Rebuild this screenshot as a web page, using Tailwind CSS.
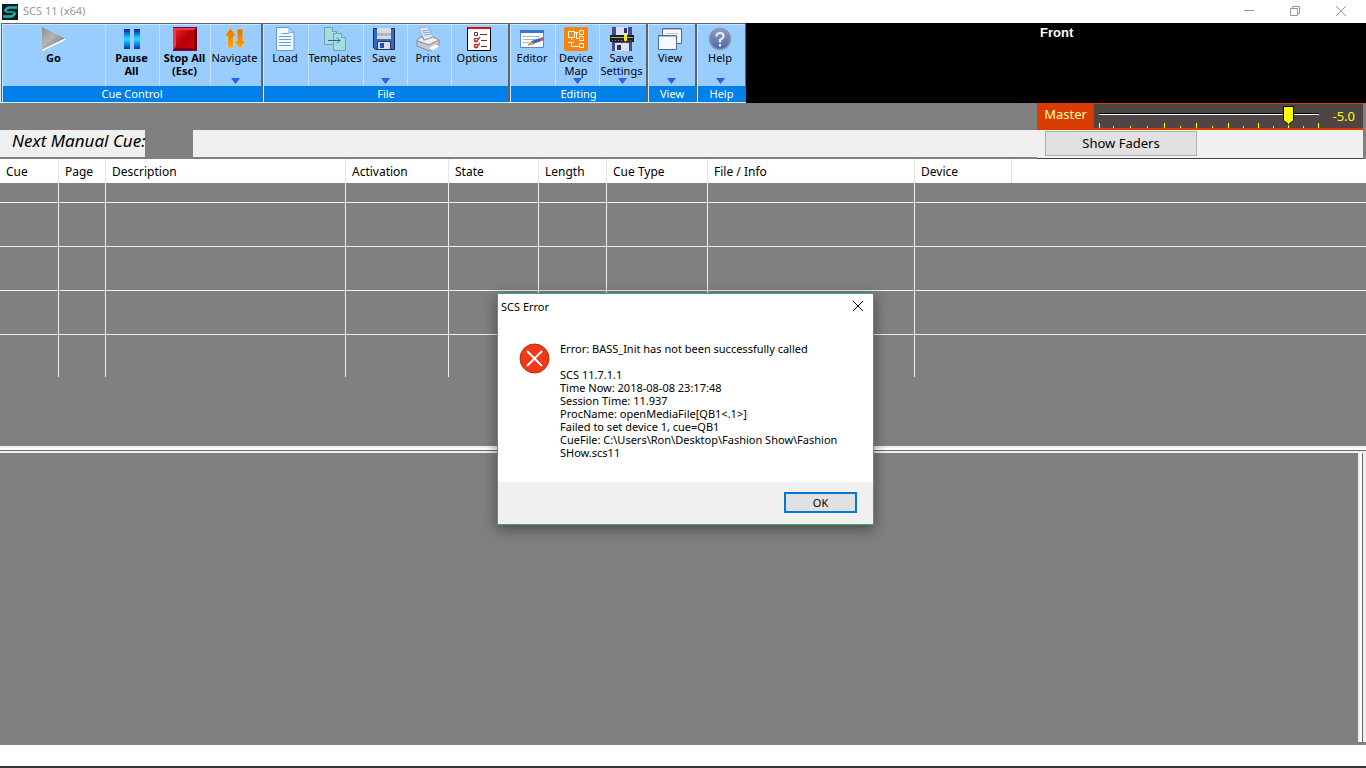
<!DOCTYPE html>
<html lang="en">
<head>
<meta charset="utf-8">
<title>SCS 11 (x64)</title>
<script src="https://cdn.jsdelivr.net/npm/@tailwindcss/browser@4"></script>
</head>
<body class="flex h-screen flex-col overflow-hidden bg-[#808080] font-['Noto_Sans',sans-serif] text-xs text-black">

<svg class="absolute h-0 w-0" aria-hidden="true">
  <defs>
    <linearGradient id="gGo" x1="0" y1="0" x2="1" y2="1"><stop offset="0" stop-color="#8c8c8c"/><stop offset=".4" stop-color="#b4b4b4"/><stop offset=".7" stop-color="#909090"/><stop offset="1" stop-color="#aaa"/></linearGradient>
    <linearGradient id="gPause" x1="0" y1="0" x2="0" y2="1"><stop offset="0" stop-color="#0a16a0"/><stop offset=".5" stop-color="#22e4ff"/><stop offset="1" stop-color="#0a30b8"/></linearGradient>
    <linearGradient id="gStop" x1="0" y1="0" x2="1" y2="1"><stop offset="0" stop-color="#e0202a"/><stop offset=".5" stop-color="#b80008"/><stop offset="1" stop-color="#d00010"/></linearGradient>
    <linearGradient id="gNav" x1="0" y1="0" x2="0" y2="1"><stop offset="0" stop-color="#d87800"/><stop offset="1" stop-color="#ffa210"/></linearGradient>
    <linearGradient id="gHelp" x1="0" y1="0" x2="0" y2="1"><stop offset="0" stop-color="#8c9ccc"/><stop offset="1" stop-color="#4c66a4"/></linearGradient>
  </defs>
</svg>

<header class="flex h-[23px] shrink-0 items-center bg-white">
  <svg class="ml-[2px] h-4 w-4" viewBox="0 0 16 16"><path fill="#101c20" d="M0 0h16v16H0z"/><path fill="none" stroke="#18b4b0" stroke-width="2.600" d="M15 3.500H8Q4 3.500 3 7.500M1 12.500h7q4 0 5-4"/><path fill="none" stroke="#18b4b0" stroke-width="1.600" d="M3 6.500q1 2 4 1.500h3q2.500 0 3 1.500"/></svg>
  <h1 class="ml-[5px] text-[11px] text-[#999]">SCS 11 (x64)</h1>
  <div class="ml-auto flex">
    <button aria-label="Minimize" class="flex h-5 w-[46px] items-center justify-center"><svg class="h-3 w-3" viewBox="0 0 12 12" stroke="#999"><path d="M1 4.500h10"/></svg></button>
    <button aria-label="Restore" class="flex h-5 w-[46px] items-center justify-center"><svg class="h-3 w-3" viewBox="0 0 12 12" fill="none" stroke="#999"><path d="M1.500 2.500h7v7h-7zM3.500 2.500v-2h7v7h-2"/></svg></button>
    <button aria-label="Close" class="mr-[2px] flex h-5 w-[46px] items-center justify-center"><svg class="h-3 w-3" viewBox="0 0 12 12" stroke="#999"><path d="M1 0l10 10M11 0L1 10"/></svg></button>
  </div>
</header>

<div class="flex h-20 shrink-0 bg-black">
  <nav class="flex w-[746px] shrink-0 border-b border-l border-[#d8ecfa] bg-[#606468] px-px pt-px text-[11px] leading-[13px] whitespace-nowrap">
    <section class="mr-[2px] flex w-[259px] flex-col border-t border-l border-[#c8e6ff]">
      <div class="flex flex-1 bg-[#99ccff]">
        <button class="flex w-[103px] flex-col items-center border-r border-[#c4e2ff] pt-[2px] pr-px font-bold"><svg class="h-6 w-6" viewBox="0 0 24 24"><path fill="url(#gGo)" d="M0 0l24 12L0 24z"/><path fill="none" stroke="#fff" stroke-width="1.500" d="M0 23.500L23.500 12"/></svg><span>Go</span></button>
        <button class="flex w-[54px] flex-col items-center border-r border-[#c4e2ff] pt-[2px] pr-[2px] font-bold"><svg class="h-6 w-6" viewBox="0 0 24 24"><path fill="url(#gPause)" d="M4 2h6v20H4zM14 2h6v20h-6z"/></svg><span>Pause<br>All</span></button>
        <button class="flex w-[51px] flex-col items-center border-r border-[#c4e2ff] pt-[2px] pr-px font-bold"><svg class="h-6 w-6" viewBox="0 0 24 24"><path fill="#780068" d="M0 0h24v24H0z"/><path fill="#f03848" d="M0 1h23l-2 2H3v17l-3 3z"/><path fill="#800008" d="M24 1v22H0l3-3h17V4z"/><path fill="url(#gStop)" d="M3 3h18v18H3z"/></svg><span>Stop All<br>(Esc)</span></button>
        <button class="relative flex flex-1 flex-col items-center pt-[2px] pr-[3px]"><svg class="h-6 w-6" viewBox="0 0 24 24"><path fill="url(#gNav)" stroke="#d4d0b0" stroke-width=".8" d="M7.500 1l6 8h-3v12h-6V9h-3z"/><path fill="url(#gNav)" stroke="#d4d0b0" stroke-width=".8" d="M14 2h6v12h3l-6 8-6-8h3z"/></svg><span>Navigate</span><svg class="absolute top-[53px] left-[20px] h-[6px] w-[9px]" viewBox="0 0 9 6"><path fill="#2860f8" d="M0 0h9L4.500 6z"/></svg></button>
      </div>
      <h2 class="h-4 bg-[#0080e8] pt-px text-center text-white">Cue Control</h2>
    </section>
    <section class="mr-[2px] flex w-[245px] flex-col border-t border-l border-[#c8e6ff]">
      <div class="flex flex-1 bg-[#99ccff]">
        <button class="flex w-[45px] flex-col items-center border-r border-[#c4e2ff] pt-[2px] pr-[2px]"><svg class="h-6 w-6" viewBox="0 0 24 24"><path fill="#f4faff" stroke="#6498d8" d="M3.500.500H16l5 5v18H3.500z"/><path fill="#b0d8f8" stroke="#78b0e8" d="M16 .500v5h5z"/><path stroke="#5aa4e8" d="M9 6.500h7M6 9.500h12M6 12.500h12M6 15.500h12M6 18.500h12"/></svg><span>Load</span></button>
        <button class="flex w-[55px] flex-col items-center border-r border-[#c4e2ff] pt-[2px] pr-[2px]"><svg class="h-6 w-6" viewBox="0 0 24 24" fill="#a6dce0" stroke="#68a4b4"><path d="M1.500.500h8l4 4v13h-12z"/><path d="M9.500.500v4h4"/><path d="M10.500 6.500h8l4 4v13h-12z"/><path d="M18.500 6.500v4h4"/><path stroke="#2868a0" fill="none" d="M5 13.500h12M14 10.500l3 3-3 3"/></svg><span>Templates</span></button>
        <button class="relative flex w-[44px] flex-col items-center border-r border-[#c4e2ff] pt-[2px] pr-[3px]"><svg class="h-6 w-6" viewBox="0 0 24 24"><path fill="#3268c8" stroke="#142850" d="M1.500 1.500h21v21h-19l-2-2z"/><path fill="#d8dce0" d="M5 1h14v11H5z"/><path fill="#b4b8c0" d="M5 6h14v3H5z"/><path fill="#d8dce0" stroke="#203870" d="M5.500 14.500h13v8h-13z"/><path fill="#2050a8" d="M8 16h4v5H8z"/></svg><span>Save</span><svg class="absolute top-[53px] left-[17px] h-[6px] w-[9px]" viewBox="0 0 9 6"><path fill="#2860f8" d="M0 0h9L4.500 6z"/></svg></button>
        <button class="flex w-[44px] flex-col items-center border-r border-[#c4e2ff] pt-[2px] pr-[3px]"><svg class="h-6 w-6" viewBox="0 0 24 24"><path fill="#dce8f8" stroke="#88a0bc" stroke-width=".7" d="M3 1l9-1 7 12-10 3z"/><path stroke="#88a8c8" d="M6 4l7-1M7 6l8-1M8 8l8-1"/><path fill="#c4c8d0" stroke="#777" stroke-width=".7" d="M1 13l5-4 2 4 9-3 6 3v6l-10 5-12-5z"/><path fill="#f0f0f0" d="M2 13l4-2 2 3 9-3 5 2-9 4z"/><path fill="none" stroke="#888" stroke-width=".8" d="M1 14l12 4 10-5"/><path fill="#fff" stroke="#aaa" stroke-width=".6" d="M12 21l7-4 5 2-7 5z"/></svg><span>Print</span></button>
        <button class="flex flex-1 flex-col items-center pt-[2px] pr-[6px]"><svg class="ml-1 h-6 w-6" viewBox="0 0 24 24"><path fill="#fff" stroke="#000" d="M.500.500h23v23H.500z"/><path fill="#e80810" d="M1 0h22v2H1z"/><path fill="none" stroke="#444" d="M7.500 5.500h3v3h-3zM7.500 11.500h3v3h-3zM7.500 17.500h3v3h-3zM13 7.500h7M14 13.500h6M14 19.500h6"/><path fill="none" stroke="#f02020" stroke-width="1.300" d="M7 12l2 3 4-5M7 18l2 3 4-5"/></svg><span>Options</span></button>
      </div>
      <h2 class="h-4 bg-[#0080e8] pt-px text-center text-white">File</h2>
    </section>
    <section class="mr-[2px] flex w-[136px] flex-col border-t border-l border-[#c8e6ff]">
      <div class="flex flex-1 bg-[#99ccff]">
        <button class="flex w-[45px] flex-col items-center border-r border-[#c4e2ff] pt-[2px] pr-[2px]"><svg class="h-6 w-6" viewBox="0 0 24 24"><path fill="#f8fbff" stroke="#6888b0" d="M.500 3.500h23v17H.500z"/><path fill="#3478cc" d="M0 3h24v3H0z"/><path stroke="#a8b4c0" d="M3 9.500h17M3 12.500h14M3 15.500h6"/><path stroke="#2f68b4" stroke-width="3" d="M12 15.500l9-3"/><path fill="#e8a060" stroke="#705040" stroke-width=".5" d="M8 18l4-4 2 3z"/><path fill="#e84838" d="M20 11l3-1 1 3-2 1z"/></svg><span>Editor</span></button>
        <button class="relative flex w-[44px] flex-col items-center border-r border-[#c4e2ff] pt-[2px] pr-[3px]"><svg class="h-6 w-6" viewBox="0 0 24 24"><rect width="24" height="24" rx="2" fill="#f58410"/><path fill="none" stroke="#fff" d="M4.500 4.500h6v6h-6zM15.500 3.500h4v4h-4zM15.500 9.500h4v4h-4zM15.500 16.500h4v4h-4zM11 5.500h3M12.500 5.500v6h2M7.500 11v2M4 15.500h6M7.500 16v3.500h7"/></svg><span>Device<br>Map</span><svg class="absolute top-[53px] left-[17px] h-[6px] w-[9px]" viewBox="0 0 9 6"><path fill="#2860f8" d="M0 0h9L4.500 6z"/></svg></button>
        <button class="relative flex flex-1 flex-col items-center pt-[2px] pr-[3px]"><svg class="h-6 w-6" viewBox="0 0 24 24"><path fill="#484890" d="M2 0h20v24H2z"/><path fill="#dce0e8" d="M6 0h12v8H6zM5 16h14v8H5z"/><path fill="#303060" d="M14 1h3v5h-3zM7 18h4v5H7z"/><path fill="#202020" d="M0 8h24v7H0z"/><path stroke="#a8a8a8" d="M1 10.500h22"/><path stroke="#909040" stroke-dasharray="1 2" d="M2 13.500h20"/><path fill="#ffee00" d="M14 8h3v5l-1.500 2-1.500-2z"/></svg><span>Save<br>Settings</span><svg class="absolute top-[53px] left-[18px] h-[6px] w-[9px]" viewBox="0 0 9 6"><path fill="#2860f8" d="M0 0h9L4.500 6z"/></svg></button>
      </div>
      <h2 class="h-4 bg-[#0080e8] pt-px text-center text-white">Editing</h2>
    </section>
    <section class="mr-[2px] flex w-[47px] flex-col border-t border-l border-[#c8e6ff]">
      <button class="relative flex flex-1 flex-col items-center bg-[#99ccff] pt-[2px] pr-1"><svg class="h-6 w-6" viewBox="0 0 24 24"><path fill="#f6faff" stroke="#506c90" d="M4.500 1.500h19v15h-19z"/><path stroke="#a8bcd4" d="M5 2.500h18"/><path stroke="#c0c8d0" d="M8 6.500h12M8 10.500h12"/><path fill="#f6faff" stroke="#506c90" d="M.500 8.500h18v14H.500z"/><path stroke="#a8bcd4" d="M1 9.500h17"/></svg><span>View</span><svg class="absolute top-[53px] left-[18px] h-[6px] w-[9px]" viewBox="0 0 9 6"><path fill="#2860f8" d="M0 0h9L4.500 6z"/></svg></button>
      <h2 class="h-4 bg-[#0080e8] pt-px text-center text-white">View</h2>
    </section>
    <section class="flex flex-1 flex-col border-t border-l border-[#c8e6ff]">
      <button class="relative flex flex-1 flex-col items-center bg-[#99ccff] pt-[2px] pr-[3px]"><svg class="h-6 w-6" viewBox="0 0 24 24"><circle cx="12" cy="12" r="10.500" fill="url(#gHelp)" stroke="#9098a8" stroke-width="1.500"/><path fill="none" stroke="#e8ecf4" stroke-width="2.200" d="M8.500 9.500Q8.500 6 12 6t3.500 3Q15.500 11 12 13v2.500M12 17v2.500"/></svg><span>Help</span><svg class="absolute top-[53px] left-[18px] h-[6px] w-[9px]" viewBox="0 0 9 6"><path fill="#2860f8" d="M0 0h9L4.500 6z"/></svg></button>
      <h2 class="h-4 bg-[#0080e8] pt-px text-center text-white">Help</h2>
    </section>
  </nav>
  <p class="flex-1 pt-[2px] pl-[294px] font-['Liberation_Sans',sans-serif] text-[13px] leading-4 font-bold text-white">Front</p>
</div>

<div class="flex h-14 shrink-0 pr-[3px]">
  <div class="flex flex-1 items-end pb-[2px]">
    <label for="next" class="h-[27px] w-[145px] bg-[#f0f0f0] pl-3 text-[17px] leading-[22px] whitespace-nowrap italic">Next Manual Cue:</label>
    <input id="next" readonly class="ml-12 h-[27px] min-w-0 flex-1 bg-[#f0f0f0] outline-none">
  </div>
  <div class="flex w-[326px] flex-col border-b border-[#404040] bg-[#f0f0f0]">
    <div class="flex h-[27px] border-t border-b-2 border-[#d83c00] bg-[#504444] text-[13px]">
      <label for="master" class="w-[57px] bg-[#d83c00] text-center leading-5 text-[#ffffa8]">Master</label>
      <div class="relative w-[232px]">
        <svg class="h-6 w-[232px]" viewBox="0 0 232 24"><path fill="#000" d="M5 9h220v1H5z"/><path fill="#fff" d="M5 10h220v1H5z"/><path stroke="#ff0" d="M5.500 19v5M70.500 19v5M102.500 19v5M134.500 19v5M164.500 19v5M194.500 19v5M224.500 19v5M19.500 22v2M36.500 22v2M53.500 22v2M86.500 22v2M118.500 22v2M149.500 22v2M179.500 22v2M209.500 22v2"/><path fill="#ff0" stroke="#000" d="M189.500 2.500h10v14l-5 4-5-4z"/></svg>
        <input id="master" type="range" min="-75" max="10" step="1" value="-5" class="absolute inset-0 h-full w-full opacity-0">
      </div>
      <output for="master" class="flex-1 pr-2 text-right leading-6 text-[#ff0]">-5.0</output>
    </div>
    <button class="mt-px ml-2 h-[25px] w-[152px] border border-[#adadad] bg-[#e1e1e1] pb-[2px] text-[13px] leading-5">Show Faders</button>
  </div>
</div>

<main class="flex min-h-0 flex-1 flex-col">
  <div class="h-[287px] shrink-0">
    <table class="w-full table-fixed border-separate border-spacing-0 text-xs">
      <colgroup><col class="w-[59px]"><col class="w-[47px]"><col class="w-[240px]"><col class="w-[103px]"><col class="w-[90px]"><col class="w-[68px]"><col class="w-[101px]"><col class="w-[207px]"><col class="w-[97px]"><col></colgroup>
      <thead class="bg-white">
        <tr class="h-6 text-left [&>th]:border-r [&>th]:border-[#e5e5e5] [&>th]:pt-[2px] [&>th]:pb-0 [&>th]:pl-[6px] [&>th]:font-normal">
          <th>Cue</th><th>Page</th><th>Description</th><th>Activation</th><th>State</th><th>Length</th><th>Cue Type</th><th>File / Info</th><th>Device</th><td></td>
        </tr>
      </thead>
      <tbody class="[&_td]:border-[#f0f0f0] [&_td]:p-0 [&_td:not(:last-child)]:border-r [&_tr:not(:last-child)>td]:border-b">
        <tr class="h-5"><td></td><td></td><td></td><td></td><td></td><td></td><td></td><td></td><td colspan="2"></td></tr>
        <tr class="h-11"><td></td><td></td><td></td><td></td><td></td><td></td><td></td><td></td><td colspan="2"></td></tr>
        <tr class="h-11"><td></td><td></td><td></td><td></td><td></td><td></td><td></td><td></td><td colspan="2"></td></tr>
        <tr class="h-11"><td></td><td></td><td></td><td></td><td></td><td></td><td></td><td></td><td colspan="2"></td></tr>
        <tr class="h-[42px]"><td></td><td></td><td></td><td></td><td></td><td></td><td></td><td></td><td colspan="2"></td></tr>
      </tbody>
    </table>
  </div>
  <div class="flex h-[7px] shrink-0 flex-col bg-[#f0f0f0] pt-[2px]"><div class="h-[3px] border-b border-[#696969] bg-white"></div></div>
  <div class="flex flex-1 justify-end pb-[3px]">
    <div class="flex w-2 bg-[#f0f0f0] pl-[2px]"><div class="w-[3px] border-r border-[#696969] bg-white"></div></div>
  </div>
</main>
<footer class="h-[23px] shrink-0 border-b-2 border-[#333] bg-white"></footer>

<div role="dialog" aria-labelledby="dlg-title" class="absolute top-[293px] left-[497px] flex w-[377px] flex-col border border-[#38a870] bg-white text-[11px] leading-[13px] shadow-[0_4px_14px_rgba(0,0,0,0.45)]">
  <div class="flex h-6 items-center justify-between pr-[9px] pl-[3px]">
    <h2 id="dlg-title">SCS Error</h2>
    <button aria-label="Close" class="flex h-3 w-3"><svg class="h-3 w-3" viewBox="0 0 12 12" stroke="#000"><path d="M1 1l10 10M11 1L1 11"/></svg></button>
  </div>
  <div class="flex h-[164px] gap-[10px] pt-6 pl-[21px]">
    <svg class="mt-px h-[31px] w-[31px] shrink-0" viewBox="0 0 31 31"><circle cx="15.500" cy="15.500" r="14.500" fill="#f03a17" stroke="#b82c10"/><path stroke="#fff" stroke-width="2" d="M8 8l15 15M23 8L8 23"/></svg>
    <p class="w-[290px]">Error: BASS_Init has not been successfully called<br><br>SCS 11.7.1.1<br>Time Now: 2018-08-08 23:17:48<br>Session Time: 11.937<br>ProcName: openMediaFile[QB1&lt;.1&gt;]<br>Failed to set device 1, cue=QB1<br>CueFile: C:\Users\Ron\Desktop\Fashion Show\Fashion<br>SHow.scs11</p>
  </div>
  <div class="flex h-[42px] items-start justify-end bg-[#f0f0f0] pt-[10px] pr-4">
    <button class="h-[21px] w-[73px] border-2 border-[#0078d7] bg-[#e1e1e1]">OK</button>
  </div>
</div>
</body>
</html>
